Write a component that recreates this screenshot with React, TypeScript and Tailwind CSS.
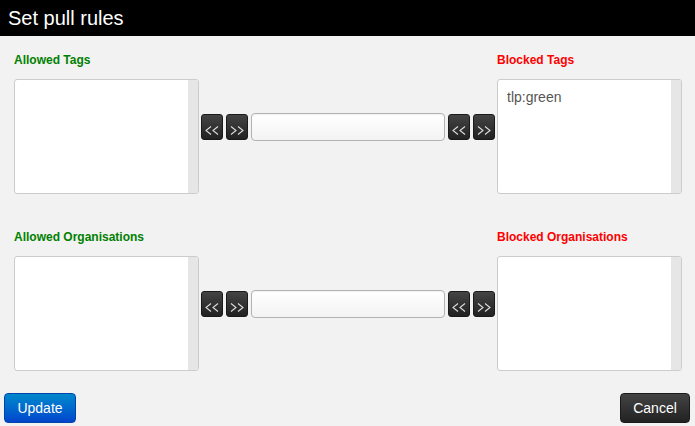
const font = { fontFamily: '"Liberation Sans", Arial, sans-serif' };

function TagList({ items }: { items: string[] }) {
  return (
    <div className="flex h-[115px] w-[185px] overflow-hidden rounded-[3px] border border-[#cccccc] bg-white">
      <div className="flex-1 pt-[9px] pl-[9px]">
        {items.map((item) => (
          <div key={item} className="text-[14px] leading-4 text-[#555555]">
            {item}
          </div>
        ))}
      </div>
      <div className="w-[10px] bg-[#e6e6e6]" />
    </div>
  );
}

// thin double chevron, sits a bit low like the text glyph
function ArrowButton({ dir }: { dir: "left" | "right" }) {
  const d =
    dir === "left"
      ? "M6 0.5 L1 4.5 L6 8.5 M13 0.5 L8 4.5 L13 8.5"
      : "M1 0.5 L6 4.5 L1 8.5 M8 0.5 L13 4.5 L8 8.5";
  return (
    <button className="flex h-[26px] w-[22px] justify-center rounded-[3px] border border-[#1a1a1a] bg-gradient-to-b from-[#444444] to-[#222222] pt-[11px]">
      <svg width="14" height="9" viewBox="0 0 14 9" fill="none">
        <path d={d} stroke="#dddddd" strokeWidth="1.1" />
      </svg>
    </button>
  );
}

function Mover() {
  return (
    <div className="mt-[34px] flex items-center gap-[3px] px-[2px]">
      <ArrowButton dir="left" />
      <ArrowButton dir="right" />
      <div className="h-[28px] flex-1 rounded-[4px] border border-[#b3b3b3] bg-gradient-to-b from-white to-[#f3f3f3] shadow-[inset_0_1px_1px_rgba(0,0,0,0.06)]" />
      <ArrowButton dir="left" />
      <ArrowButton dir="right" />
    </div>
  );
}

function RuleRow({ allowed, blocked, blockedItems }: { allowed: string; blocked: string; blockedItems: string[] }) {
  return (
    <div>
      <div className="flex justify-between">
        <div className="w-[185px] text-[12px] font-bold leading-4 text-[#008000]">{allowed}</div>
        <div className="w-[185px] text-[12px] font-bold leading-4 text-[#ff0000]">{blocked}</div>
      </div>
      <div className="mt-[11px] flex">
        <TagList items={[]} />
        <div className="flex-1">
          <Mover />
        </div>
        <TagList items={blockedItems} />
      </div>
    </div>
  );
}

export default function App() {
  return (
    <div className="h-[426px] w-[695px] bg-[#f2f2f2]" style={font}>
      <div className="flex h-[36px] items-center bg-black pl-[8px] text-[20px] text-white">Set pull rules</div>

      <div className="pl-[14px] pr-[13px] pt-[16px]">
        <RuleRow allowed="Allowed Tags" blocked="Blocked Tags" blockedItems={["tlp:green"]} />
        <div className="h-[35px]" />
        <RuleRow allowed="Allowed Organisations" blocked="Blocked Organisations" blockedItems={[]} />
      </div>

      {/* footer */}
      <div className="mt-[22px] flex justify-between px-[4px] pr-[5px]">
        <button className="h-[30px] w-[72px] rounded-[4px] border border-[#0044aa] bg-gradient-to-b from-[#0088cc] to-[#0044cc] text-[14px] text-white">
          Update
        </button>
        <button className="h-[30px] w-[70px] rounded-[4px] border border-[#1a1a1a] bg-gradient-to-b from-[#444444] to-[#222222] text-[14px] text-white">
          Cancel
        </button>
      </div>
    </div>
  );
}
